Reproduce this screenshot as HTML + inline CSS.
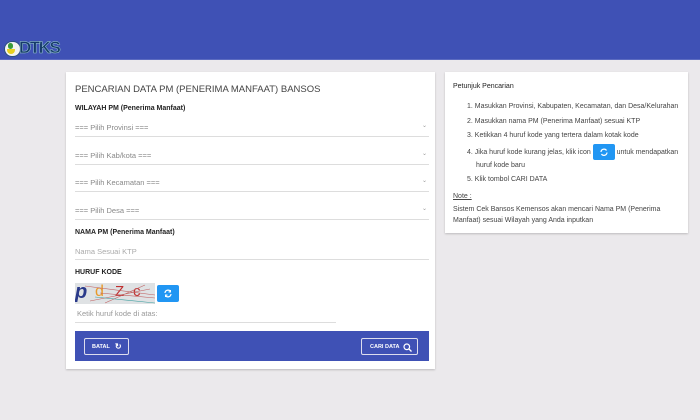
<!DOCTYPE html>
<html><head><meta charset="utf-8">
<style>
*{margin:0;padding:0;box-sizing:border-box}
body{width:700px;height:420px;background:#ebe9ec;font-family:"Liberation Sans",sans-serif;position:relative;overflow:hidden;color:#333}
.hdr{position:absolute;left:0;top:0;width:700px;height:60px;background:#3f51b5;border-bottom:1px solid #5c6bc0}
.card{position:absolute;background:#fff;box-shadow:0 1px 2px rgba(0,0,0,.2)}
.a{position:absolute;white-space:nowrap}
.sel{position:absolute;left:75px;width:354px;height:1px;background:#ddd}
.ph{font-size:7.5px;color:#888}
.chev{position:absolute;left:422px;font-size:6px;color:#999}
.lbl{font-size:7px;font-weight:bold;color:#222}
ol{position:absolute;left:467px;top:100px;font-size:7px;color:#444;list-style:none}
ol li{height:14.5px;line-height:14px;white-space:nowrap}
.rbtn{display:inline-block;background:#2196f3;border-radius:2px;width:22px;height:16px;vertical-align:middle;position:relative}
</style></head><body>
<div class="hdr"></div>
<div class="a" style="left:4px;top:41px;width:17px;height:16px;border-radius:8px;background:#f2f2f2;border:1px solid #2a4f80"></div>
<div class="a" style="left:7px;top:49px;width:8px;height:5px;background:#e8d020;border-radius:0 0 4px 4px"></div>
<div class="a" style="left:8px;top:43px;width:5px;height:6px;background:#3a9a3a;border-radius:3px"></div>
<div class="a" style="left:19px;top:38px;font-size:17px;font-weight:bold;color:#163a6a;letter-spacing:-1.5px;-webkit-text-stroke:.5px #9cc">DTKS</div>

<div class="card" style="left:66px;top:72px;width:369px;height:297px"></div>
<div class="card" style="left:445px;top:72px;width:243px;height:161px"></div>

<div class="a" style="left:75px;top:84px;font-size:9.5px;color:#444">PENCARIAN DATA PM (PENERIMA MANFAAT) BANSOS</div>
<div class="a lbl" style="left:75px;top:105px">WILAYAH PM (Penerima Manfaat)</div>
<div class="a ph" style="left:75px;top:123px">=== Pilih Provinsi ===</div><div class="chev" style="top:122px">⌄</div>
<div class="sel" style="top:136px"></div>
<div class="a ph" style="left:75px;top:151px">=== Pilih Kab/kota ===</div><div class="chev" style="top:150px">⌄</div>
<div class="sel" style="top:164px"></div>
<div class="a ph" style="left:75px;top:178px">=== Pilih Kecamatan ===</div><div class="chev" style="top:177px">⌄</div>
<div class="sel" style="top:191px"></div>
<div class="a ph" style="left:75px;top:206px">=== Pilih Desa ===</div><div class="chev" style="top:205px">⌄</div>
<div class="sel" style="top:219px"></div>

<div class="a lbl" style="left:75px;top:229px">NAMA PM (Penerima Manfaat)</div>
<div class="a ph" style="left:75px;top:247px;color:#aaa">Nama Sesuai KTP</div>
<div class="sel" style="top:259px"></div>
<div class="a lbl" style="left:75px;top:269px">HURUF KODE</div>
<div class="a" style="left:75px;top:283px;width:80px;height:21px;background:#dfe2e4;overflow:hidden">
 <span class="a" style="left:0;top:-2px;font-size:20px;font-weight:bold;font-style:italic;color:#2a3a8a">p</span>
 <span class="a" style="left:20px;top:0;font-size:16px;color:#e89a2a">d</span>
 <span class="a" style="left:40px;top:0;font-size:15px;color:#c03030">Z</span>
 <span class="a" style="left:58px;top:0;font-size:15px;color:#c03030">c</span>
 <svg class="a" style="left:0;top:0" width="80" height="21"><path d="M10 3L80 12M15 18L75 6M25 10L80 15M30 20L70 2" stroke="#c06060" stroke-width=".6" fill="none"/><path d="M20 14L80 20" stroke="#40a0a0" stroke-width=".6"/></svg>
</div>
<div class="a" style="left:157px;top:285px;width:22px;height:17px;background:#2196f3;border-radius:2px">
 <svg width="22" height="17"><path d="M8 8a3 3 0 0 1 5.5-1.5M14 9a3 3 0 0 1-5.5 1.5" stroke="#fff" stroke-width="1.2" fill="none"/><path d="M13.5 5v2h-2M8.5 12v-2h2" stroke="#fff" stroke-width="1" fill="none"/></svg>
</div>
<div class="a ph" style="left:77px;top:309px;color:#999">Ketik huruf kode di atas:</div>
<div class="a" style="left:75px;top:322px;width:261px;height:1px;background:#ddd"></div>

<div class="a" style="left:75px;top:331px;width:354px;height:30px;background:#3f51b5"></div>
<div class="a" style="left:84px;top:338px;width:45px;height:17px;border:1px solid #dde;border-radius:2px;color:#fff;font-size:5.5px;font-weight:bold;display:flex;align-items:center;padding-left:7px">BATAL <span style="font-size:8px;margin-left:5px">↻</span></div>
<div class="a" style="left:361px;top:338px;width:57px;height:17px;border:1px solid #dde;border-radius:2px;color:#fff;font-size:5.5px;font-weight:bold;display:flex;align-items:center;padding-left:8px">CARI DATA
 <svg style="position:absolute;left:41px;top:4px" width="9" height="9"><circle cx="3.8" cy="3.8" r="2.8" stroke="#fff" stroke-width="1.2" fill="none"/><path d="M6 6L8.5 8.5" stroke="#fff" stroke-width="1.3"/></svg></div>

<div class="a" style="left:453px;top:83px;font-size:7px;color:#222">Petunjuk Pencarian</div>
<ol>
<li>1. Masukkan Provinsi, Kabupaten, Kecamatan, dan Desa/Kelurahan</li>
<li>2. Masukkan nama PM (Penerima Manfaat) sesuai KTP</li>
<li>3. Ketikkan 4 huruf kode yang tertera dalam kotak kode</li>
<li style="height:15px">4. Jika huruf kode kurang jelas, klik icon <span class="rbtn"><svg width="22" height="16" style="position:absolute;left:0;top:0"><path d="M8 8a3 3 0 0 1 5.5-1.5M14 8.5a3 3 0 0 1-5.5 1.5" stroke="#fff" stroke-width="1.2" fill="none"/></svg></span> untuk mendapatkan</li>
<li style="padding-left:9px">huruf kode baru</li>
<li>5. Klik tombol CARI DATA</li>
</ol>
<div class="a" style="left:453px;top:193px;font-size:7px;color:#444;text-decoration:underline">Note :</div>
<div class="a" style="left:453px;top:204px;font-size:7px;color:#444;line-height:11px">Sistem Cek Bansos Kemensos akan mencari Nama PM (Penerima<br>Manfaat) sesuai Wilayah yang Anda inputkan</div>
</body></html>
